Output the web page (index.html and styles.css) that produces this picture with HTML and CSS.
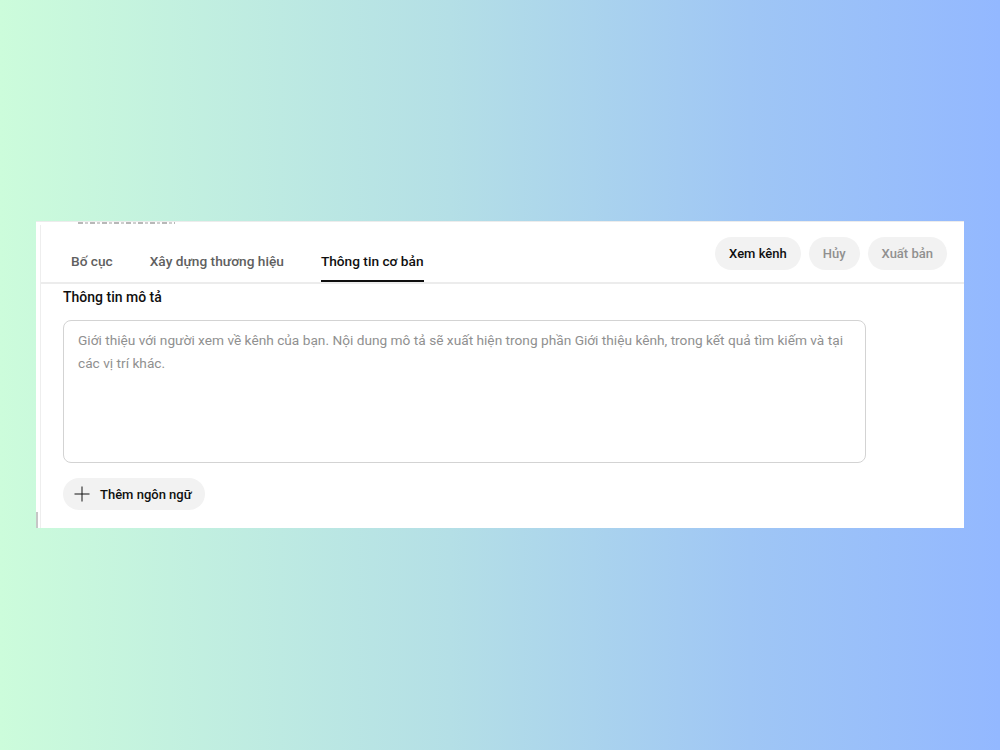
FILE: index.html
```html
<!DOCTYPE html>
<html lang="vi">
<head>
<meta charset="utf-8">
<title>Tùy chỉnh kênh</title>
<link rel="stylesheet" href="styles.css">
</head>
<body>
<div class="stage">
  <section class="panel">
    <div class="prev-row"><i class="prev-fade"></i></div>
    <div class="frame">
      <header class="topbar">
        <nav class="tabs">
          <a class="tab">Bố cục</a>
          <a class="tab">Xây dựng thương hiệu</a>
          <a class="tab active">Thông tin cơ bản</a>
        </nav>
        <div class="actions">
          <button class="pill primary">Xem kênh</button>
          <button class="pill disabled">Hủy</button>
          <button class="pill disabled">Xuất bản</button>
        </div>
      </header>
      <div class="content">
        <h3 class="label">Thông tin mô tả</h3>
        <div class="textarea">Giới thiệu với người xem về kênh của bạn. Nội dung mô tả sẽ xuất hiện trong phần Giới thiệu kênh, trong kết quả tìm kiếm và tại các vị trí khác.</div>
        <button class="pill add">
          <svg width="18" height="18" viewBox="0 0 24 24" aria-hidden="true"><path d="M12 2v20M2 12h20" stroke="#0f0f0f" stroke-width="1.3" fill="none"/></svg>
          <span>Thêm ngôn ngữ</span>
        </button>
      </div>
    </div>
    <div class="scroll-thumb"></div>
  </section>
</div>
</body>
</html>
```
FILE: styles.css
```css
* { box-sizing: border-box; }

html, body {
  margin: 0;
  height: 100%;
}

body {
  font-family: Roboto, "Noto Sans", Arial, sans-serif;
  color: #0f0f0f;
  background: linear-gradient(90deg, #ccfcdb 0%, #b4dfe6 45%, #9fc6f5 75%, #93b8ff 100%);
}

.stage {
  height: 750px;
  padding-top: 221px;
  padding-left: 36px;
}

.panel {
  position: relative;
  width: 928px;
  height: 307px;
  background: #fff;
  border-top: 1px solid #ececec;
  overflow: hidden;
}

/* faded bottom edge of the row scrolled away above */
.prev-row {
  height: 3px;
  padding-left: 42px;
}
.prev-fade {
  display: block;
  width: 97px;
  height: 2px;
  background: repeating-linear-gradient(90deg, #b8b8b8 0 5px, transparent 5px 7px, #cfcfcf 7px 10px, transparent 10px 12px);
}

.frame {
  margin-left: 4px;
  border-left: 1px solid #eeeeee;
  height: 100%;
}

.topbar {
  display: flex;
  align-items: center;
  justify-content: space-between;
  height: 59px;
  padding: 0 17px 0 30px;
  border-bottom: 2px solid #ececec;
}

.tabs {
  display: flex;
  align-self: stretch;
  gap: 37px;
}

.tab {
  display: flex;
  align-items: center;
  padding-top: 16px;
  font-size: 13.7px;
  font-weight: 500;
  color: #606060;
  border-bottom: 2px solid transparent;
  cursor: pointer;
}

.tab.active {
  color: #0f0f0f;
  border-bottom-color: #0f0f0f;
}

.actions {
  display: flex;
  gap: 8px;
  margin-top: -1px;
}

.pill {
  font-family: inherit;
  border: 0;
  border-radius: 18px;
  background: #f2f2f2;
  height: 33px;
  padding: 0 14px;
  font-size: 13px;
  font-weight: 500;
  cursor: pointer;
}

.pill.primary { color: #0f0f0f; }
.pill.disabled { color: #909090; }

.content {
  padding: 5px 0 0 22px;
}

.label {
  margin: 0 0 14px;
  font-size: 14px;
  font-weight: 500;
  line-height: 17px;
}

.textarea {
  width: 803px;
  height: 143px;
  border: 1px solid #d3d3d3;
  border-radius: 8px;
  padding: 8px 14px;
  font-size: 13.7px;
  line-height: 23px;
  color: #909090;
}

.pill.add {
  display: flex;
  align-items: center;
  gap: 9px;
  margin-top: 15px;
  height: 32px;
  padding: 0 13px 0 10px;
  color: #0f0f0f;
}

.scroll-thumb {
  position: absolute;
  left: 0;
  bottom: 0;
  width: 2px;
  height: 16px;
  background: #c6c6c6;
}
```
